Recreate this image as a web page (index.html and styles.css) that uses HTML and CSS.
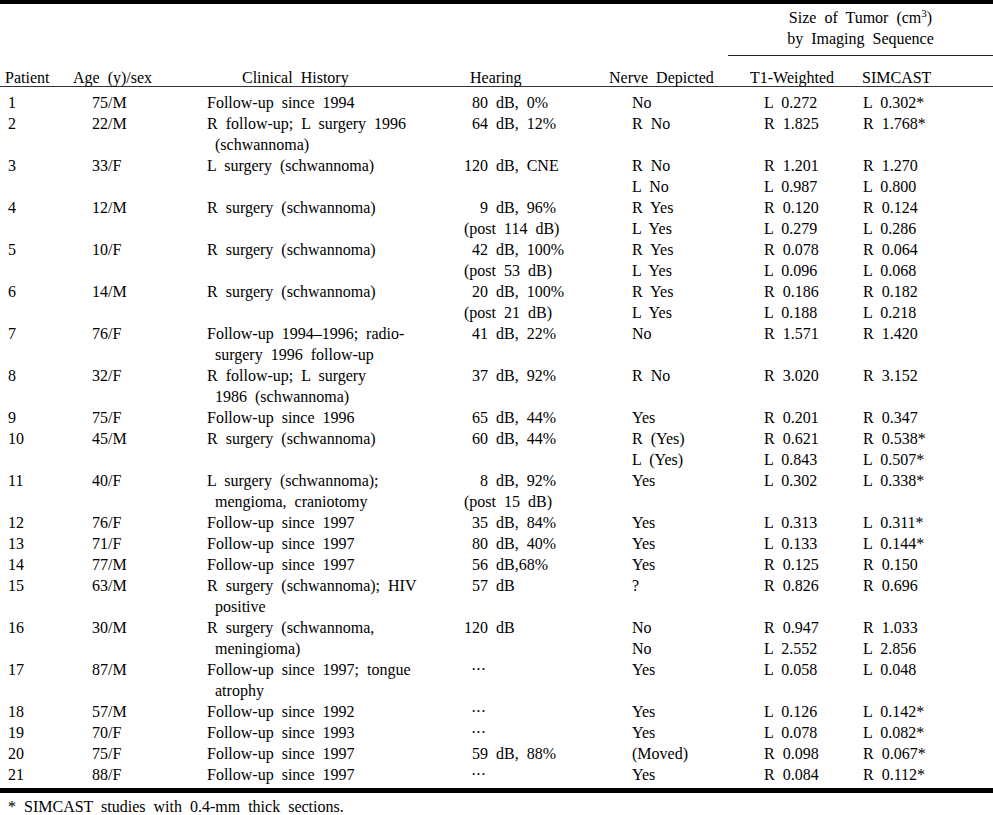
FILE: index.html
```html
<!DOCTYPE html>
<html lang="en">
<head>
<meta charset="utf-8">
<title>Table</title>
<link rel="stylesheet" href="styles.css">
</head>
<body>
<table class="t">
  <colgroup>
    <col class="w1"><col class="w2"><col class="w3"><col class="w4"><col class="w5"><col class="w6"><col class="w7">
  </colgroup>
  <thead>
    <tr class="span-row">
      <th colspan="5" class="blank"></th>
      <th colspan="2" class="spanner">Size of Tumor (cm<sup class="sup">3</sup>)<br>by Imaging Sequence</th>
    </tr>
    <tr class="head-row">
      <th>Patient</th>
      <th>Age (y)/sex</th>
      <th>Clinical History</th>
      <th>Hearing</th>
      <th>Nerve Depicted</th>
      <th>T1-Weighted</th>
      <th>SIMCAST</th>
    </tr>
  </thead>
  <tbody>
    <tr><td>1</td><td>75/M</td><td class="ch">Follow-up since 1994</td><td><span class="i1">80 dB, 0%</span></td><td>No</td><td>L 0.272</td><td>L 0.302*</td></tr>
    <tr><td>2</td><td>22/M</td><td class="ch">R follow-up; L surgery 1996<br>(schwannoma)</td><td><span class="i1">64 dB, 12%</span></td><td>R No</td><td>R 1.825</td><td>R 1.768*</td></tr>
    <tr><td>3</td><td>33/F</td><td class="ch">L surgery (schwannoma)</td><td><span class="i0">120 dB, CNE</span></td><td>R No<br>L No</td><td>R 1.201<br>L 0.987</td><td>R 1.270<br>L 0.800</td></tr>
    <tr><td>4</td><td>12/M</td><td class="ch">R surgery (schwannoma)</td><td><span class="i2">9 dB, 96%</span><span class="i0">(post 114 dB)</span></td><td>R Yes<br>L Yes</td><td>R 0.120<br>L 0.279</td><td>R 0.124<br>L 0.286</td></tr>
    <tr><td>5</td><td>10/F</td><td class="ch">R surgery (schwannoma)</td><td><span class="i1">42 dB, 100%</span><span class="i0">(post 53 dB)</span></td><td>R Yes<br>L Yes</td><td>R 0.078<br>L 0.096</td><td>R 0.064<br>L 0.068</td></tr>
    <tr><td>6</td><td>14/M</td><td class="ch">R surgery (schwannoma)</td><td><span class="i1">20 dB, 100%</span><span class="i0">(post 21 dB)</span></td><td>R Yes<br>L Yes</td><td>R 0.186<br>L 0.188</td><td>R 0.182<br>L 0.218</td></tr>
    <tr><td>7</td><td>76/F</td><td class="ch">Follow-up 1994–1996; radio-<br>surgery 1996 follow-up</td><td><span class="i1">41 dB, 22%</span></td><td>No</td><td>R 1.571</td><td>R 1.420</td></tr>
    <tr><td>8</td><td>32/F</td><td class="ch">R follow-up; L surgery<br>1986 (schwannoma)</td><td><span class="i1">37 dB, 92%</span></td><td>R No</td><td>R 3.020</td><td>R 3.152</td></tr>
    <tr><td>9</td><td>75/F</td><td class="ch">Follow-up since 1996</td><td><span class="i1">65 dB, 44%</span></td><td>Yes</td><td>R 0.201</td><td>R 0.347</td></tr>
    <tr><td>10</td><td>45/M</td><td class="ch">R surgery (schwannoma)</td><td><span class="i1">60 dB, 44%</span></td><td>R (Yes)<br>L (Yes)</td><td>R 0.621<br>L 0.843</td><td>R 0.538*<br>L 0.507*</td></tr>
    <tr><td>11</td><td>40/F</td><td class="ch">L surgery (schwannoma);<br>mengioma, craniotomy</td><td><span class="i2">8 dB, 92%</span><span class="i0">(post 15 dB)</span></td><td>Yes</td><td>L 0.302</td><td>L 0.338*</td></tr>
    <tr><td>12</td><td>76/F</td><td class="ch">Follow-up since 1997</td><td><span class="i1">35 dB, 84%</span></td><td>Yes</td><td>L 0.313</td><td>L 0.311*</td></tr>
    <tr><td>13</td><td>71/F</td><td class="ch">Follow-up since 1997</td><td><span class="i1">80 dB, 40%</span></td><td>Yes</td><td>L 0.133</td><td>L 0.144*</td></tr>
    <tr><td>14</td><td>77/M</td><td class="ch">Follow-up since 1997</td><td><span class="i1">56 dB,68%</span></td><td>Yes</td><td>R 0.125</td><td>R 0.150</td></tr>
    <tr><td>15</td><td>63/M</td><td class="ch">R surgery (schwannoma); HIV<br>positive</td><td><span class="i1">57 dB</span></td><td>?</td><td>R 0.826</td><td>R 0.696</td></tr>
    <tr><td>16</td><td>30/M</td><td class="ch">R surgery (schwannoma,<br>meningioma)</td><td><span class="i0">120 dB</span></td><td>No<br>No</td><td>R 0.947<br>L 2.552</td><td>R 1.033<br>L 2.856</td></tr>
    <tr><td>17</td><td>87/M</td><td class="ch">Follow-up since 1997; tongue<br>atrophy</td><td><span class="i0 dots">···</span></td><td>Yes</td><td>L 0.058</td><td>L 0.048</td></tr>
    <tr><td>18</td><td>57/M</td><td class="ch">Follow-up since 1992</td><td><span class="i0 dots">···</span></td><td>Yes</td><td>L 0.126</td><td>L 0.142*</td></tr>
    <tr><td>19</td><td>70/F</td><td class="ch">Follow-up since 1993</td><td><span class="i0 dots">···</span></td><td>Yes</td><td>L 0.078</td><td>L 0.082*</td></tr>
    <tr><td>20</td><td>75/F</td><td class="ch">Follow-up since 1997</td><td><span class="i1">59 dB, 88%</span></td><td>(Moved)</td><td>R 0.098</td><td>R 0.067*</td></tr>
    <tr><td>21</td><td>88/F</td><td class="ch">Follow-up since 1997</td><td><span class="i0 dots">···</span></td><td>Yes</td><td>R 0.084</td><td>R 0.112*</td></tr>
  </tbody>
</table>
<p class="note">* SIMCAST studies with 0.4-mm thick sections.</p>
</body>
</html>
```

FILE: styles.css
```css
html, body {
  margin: 0;
  padding: 0;
  background: #fff;
}

body {
  font-family: "Liberation Serif", "Times New Roman", serif;
  font-size: 16px;
  word-spacing: 4px;
  color: #000;
  width: 993px;
}

.t {
  width: 993px;
  table-layout: fixed;
  border-collapse: separate;
  border-spacing: 0;
  border-top: 4px solid #000;
}

.w1 { width: 62px; }
.w2 { width: 138px; }
.w3 { width: 255px; }
.w4 { width: 135px; }
.w5 { width: 138px; }
.w6 { width: 120px; }
.w7 { width: 145px; }

.t th,
.t td {
  font-weight: normal;
  text-align: left;
  vertical-align: top;
  padding: 0;
  line-height: 21px;
  white-space: nowrap;
}

.spanner {
  text-align: center !important;
  padding: 3px 0 6px 0 !important;
  border-bottom: 1px solid #222;
}

.sup {
  font-size: 11px;
  line-height: 0;
  vertical-align: 6px;
}

.head-row th {
  padding-top: 13px;
  line-height: 17px;
  border-bottom: 1px solid #333;
}

.head-row th:nth-child(1) { padding-left: 5px; }
.head-row th:nth-child(2) { padding-left: 11px; }
.head-row th:nth-child(3) { padding-left: 42px; }
.head-row th:nth-child(4) { padding-left: 15px; }
.head-row th:nth-child(5) { padding-left: 19px; }
.head-row th:nth-child(6) { padding-left: 22px; }
.head-row th:nth-child(7) { padding-left: 14px; }

.t tbody td:nth-child(1) { padding-left: 8px; }
.t tbody td:nth-child(2) { padding-left: 30px; }
.t tbody td:nth-child(3) { padding-left: 15px; text-indent: -8px; }
.t tbody td:nth-child(4) { padding-left: 9px; }
.t tbody td:nth-child(5) { padding-left: 42px; }
.t tbody td:nth-child(6) { padding-left: 36px; }
.t tbody td:nth-child(7) { padding-left: 15px; }

.t tbody tr:first-child td { padding-top: 5px; }
.t tbody tr:last-child td {
  padding-bottom: 3px;
  border-bottom: 5px solid #000;
}

.i0, .i1, .i2 { display: block; }
.i0 { padding-left: 0; }
.i1 { padding-left: 8px; }
.i2 { padding-left: 16px; }
.dots { padding-left: 7px; letter-spacing: -0.5px; }

.note {
  margin: 3px 0 0 0;
  padding-left: 8px;
  line-height: 21px;
}
```
